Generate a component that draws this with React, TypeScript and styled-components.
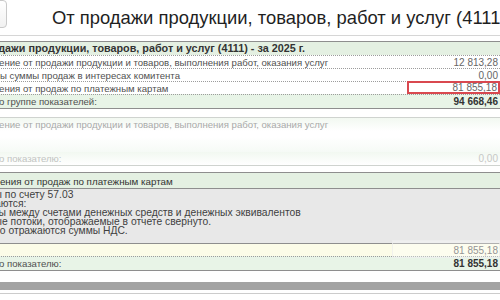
import styled, { createGlobalStyle } from "styled-components";

const GlobalStyle = createGlobalStyle`
  html, body {
    margin: 0;
    padding: 0;
    background: #fff;
  }
  body {
    width: 500px;
    height: 300px;
    overflow: hidden;
    font-family: "Liberation Sans", Arial, sans-serif;
  }
`;

type Tone = "plain" | "total" | "input";

interface ILine {
  label: string;
  value: string;
  tone?: Tone;
  marked?: boolean;
  first?: boolean;
}

const salesLines: ILine[] = [
  { label: "Поступление от продажи продукции и товаров, выполнения работ, оказания услуг", value: "12 813,28" },
  { label: "Получены суммы продаж в интересах комитента", value: "0,00" },
  { label: "Поступления от продаж по платежным картам", value: "81 855,18", marked: true },
  { label: "Итого по группе показателей:", value: "94 668,46", tone: "total" },
];

const cardNotes = [
  "Обороты по счету 57.03",
  "Исключаются:",
  "переводы между счетами денежных средств и денежных эквивалентов",
  "денежные потоки, отображаемые в отчете свернуто.",
  "Отдельно отражаются суммы НДС.",
];

const Line: React.FC<ILine> = ({ label, value, tone = "plain", marked, first }) => (
  <Row $tone={tone} $first={first}>
    <Label $indent={tone === "total"}>{label}</Label>
    <Value $bold={tone === "total"} $marked={marked}>{value}</Value>
  </Row>
);

export default function App() {
  return (
    <>
      <GlobalStyle />
      <Page>
        <TopBar>
          <BackButton />
          <Title>От продажи продукции, товаров, работ и услуг (4111)</Title>
        </TopBar>
        <Viewport>
          <Sheet>
            <Section>
              <SectionHead $bold>От продажи продукции, товаров, работ и услуг (4111) - за 2025 г.</SectionHead>
              {salesLines.map((l) => (
                <Line key={l.label} {...l} />
              ))}
            </Section>

            <FadingSection>
              <FadedRow>
                <Label>Поступление от продажи продукции и товаров, выполнения работ, оказания услуг</Label>
              </FadedRow>
              <FadedRow $total>
                <Label $indent>Итого по показателю:</Label>
                <Value $muted>0,00</Value>
              </FadedRow>
            </FadingSection>

            <Section $gap={6}>
              <SectionHead>Поступления от продаж по платежным картам</SectionHead>
              <Note>
                {cardNotes.map((n) => (
                  <NoteLine key={n}>{n}</NoteLine>
                ))}
              </Note>
              <Line label="" value="81 855,18" tone="input" first />
              <Line label="Итого по показателю:" value="81 855,18" tone="total" />
              <Hint />
            </Section>

            <ScrollTrack />
            <BottomRule />
          </Sheet>
        </Viewport>
      </Page>
    </>
  );
}

const Page = styled.div`
  width: 500px;
  height: 300px;
  overflow: hidden;
`;

const TopBar = styled.div`
  display: flex;
  align-items: flex-start;
  height: 35px;
  border-bottom: 1px solid #d6d6d6;
`;

const BackButton = styled.div`
  flex: none;
  width: 30px;
  height: 28px;
  margin-left: -23px;
  box-sizing: border-box;
  border: 1px solid #c9c9c9;
  border-radius: 4px;
  background: linear-gradient(#ffffff, #f1f1f1);
`;

const Title = styled.h1`
  margin: 5px 0 0 45px;
  font-size: 18.4px;
  line-height: 26px;
  font-weight: normal;
  color: #1f1f1f;
  white-space: nowrap;
`;

const Viewport = styled.div`
  overflow: hidden;
`;

/* the form is scrolled a little to the right, so its left edge is hidden */
const Sheet = styled.div`
  width: 541px;
  margin-left: -41px;
  padding-top: 5px;
`;

const Section = styled.section<{ $gap?: number }>`
  position: relative;
  margin-top: ${(p) => p.$gap ?? 0}px;
  border-top: 1px solid #8e8e8e;
  border-bottom: 1px solid #8e8e8e;
`;

const SectionHead = styled.div<{ $bold?: boolean }>`
  box-sizing: border-box;
  height: ${(p) => (p.$bold ? 13 : 15)}px;
  padding: ${(p) => (p.$bold ? 0 : 2)}px 3px 0;
  line-height: 13px;
  font-size: ${(p) => (p.$bold ? 10.8 : 9.8)}px;
  font-weight: ${(p) => (p.$bold ? "bold" : "normal")};
  color: #333;
  white-space: nowrap;
  background: #e4f0e2;
`;

const Row = styled.div<{ $tone: Tone; $first?: boolean }>`
  display: flex;
  justify-content: space-between;
  align-items: center;
  height: ${(p) => (p.$tone === "total" ? 13 : 12)}px;
  padding: 0 2px 0 3px;
  font-size: 9.6px;
  color: #505050;
  border-top: ${(p) => (p.$first ? "none" : "1px dotted #9c9c9c")};
  background: ${(p) =>
    p.$tone === "total" ? "#e8f4e7" : p.$tone === "input" ? "#fcfce8" : "#fff"};
`;

const Label = styled.span<{ $indent?: boolean }>`
  white-space: nowrap;
  padding-left: ${(p) => (p.$indent ? 4 : 0)}px;
`;

const Value = styled.span<{ $bold?: boolean; $marked?: boolean; $muted?: boolean }>`
  flex: none;
  box-sizing: border-box;
  width: 93px;
  text-align: right;
  font-size: 10px;
  font-weight: ${(p) => (p.$bold ? "bold" : "normal")};
  color: ${(p) => (p.$muted ? "#c6c8c6" : p.$bold ? "#333" : "#666")};
  ${(p) =>
    p.$marked
      ? `
    align-self: flex-start;
    height: 13px;
    margin: -1px -2px 0 0;
    padding-right: 1px;
    line-height: 9px;
    border: 2px solid #d9484f;
  `
      : `
    padding-right: 0;
  `}
`;

const FadingSection = styled.section`
  box-sizing: border-box;
  height: 49px;
  margin-top: 8px;
  display: flex;
  flex-direction: column;
  justify-content: space-between;
  border-top: 1px solid #cfd3cf;
  border-bottom: 1px solid #cfd3cf;
  background: linear-gradient(#ffffff 40%, #eef6ee);
`;

const FadedRow = styled.div<{ $total?: boolean }>`
  display: flex;
  justify-content: space-between;
  align-items: center;
  height: 13px;
  padding: 0 2px 0 3px;
  font-size: 9.6px;
  color: ${(p) => (p.$total ? "#c2c4c2" : "#a9aaa9")};
  background: linear-gradient(#f2f8f1, #ffffff);
`;

const Note = styled.div`
  box-sizing: border-box;
  height: 56px;
  padding: 1px 0 0;
  background: #e8e8e8;
  border-top: 1px solid #8e8e8e;
  border-bottom: 1px solid #8e8e8e;
  font-size: 10.3px;
  line-height: 9px;
  color: #3f3f3f;
`;

const NoteLine = styled.div`
  white-space: nowrap;
`;

const Hint = styled.div`
  position: absolute;
  right: 0;
  top: 67px;
  width: 106px;
  height: 16px;
  background: rgba(255, 255, 255, 0.3);
  border: 1px solid rgba(236, 236, 236, 0.7);
`;

const ScrollTrack = styled.div`
  height: 8px;
  margin-top: 11px;
  background: #a3a3a3;
`;

const BottomRule = styled.div`
  height: 1px;
  margin-top: 3px;
  background: #cccccc;
`;
